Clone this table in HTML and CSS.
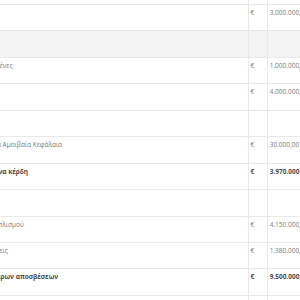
FILE: index.html
```html
<!DOCTYPE html>
<html lang="el">
<head>
<meta charset="utf-8">
<link rel="stylesheet" href="styles.css">
</head>
<body>
<div class="sheet">
  <div class="row partial"><div class="label"></div><div class="cur"></div><div class="amt"></div></div>
  <div class="row"><div class="label"></div><div class="cur">€</div><div class="amt">3.000.000,00</div></div>
  <div class="row shaded"><div class="label"></div><div class="cur"></div><div class="amt"></div></div>
  <div class="row"><div class="label">Μετοχές μη εισηγμένες</div><div class="cur">€</div><div class="amt">1.000.000,00</div></div>
  <div class="row"><div class="label"></div><div class="cur">€</div><div class="amt">4.000.000,00</div></div>
  <div class="row"><div class="label"></div><div class="cur"></div><div class="amt"></div></div>
  <div class="row"><div class="label">Επενδύσεις σε ξένα Αμοιβαία Κεφάλαια</div><div class="cur">€</div><div class="amt">30.000,00</div></div>
  <div class="row total"><div class="label">Πραγματοποιημένα κέρδη</div><div class="cur">€</div><div class="amt">3.970.000,00</div></div>
  <div class="row"><div class="label"></div><div class="cur"></div><div class="amt"></div></div>
  <div class="row"><div class="label">Αρχικό κόστος εξοπλισμού</div><div class="cur">€</div><div class="amt">4.150.000,00</div></div>
  <div class="row"><div class="label">Κτίρια Εγκαταστάσεις</div><div class="cur">€</div><div class="amt">1.380.000,00</div></div>
  <div class="row total"><div class="label">Αξία όλων ελεύθερων αποσβέσεων</div><div class="cur">€</div><div class="amt">9.500.000,00</div></div>
  <div class="row end"><div class="label"></div><div class="cur"></div><div class="amt"></div></div>
</div>
</body>
</html>
```
FILE: styles.css
```css
html, body {
  margin: 0;
  padding: 0;
  overflow: hidden;
  background: #ffffff;
}
body {
  width: 300px;
  height: 300px;
  font-family: "Open Sans", "Liberation Sans", sans-serif;
  font-size: 6.5px;
  color: #7a7a7a;
}
.sheet {
  margin-left: -60px;
  width: 420px;
}
.row {
  display: grid;
  grid-template-columns: 307.6px 19.6px 1fr;
  height: 26.45px;
  box-sizing: border-box;
  border-top: 1px solid #e8e8e8;
}
.row.partial {
  height: 4px;
  border-top: none;
}
.row.shaded {
  background: #f3f3f3;
}
.row.total {
  font-weight: 700;
  color: #4a4a4a;
}
.row.end {
  height: 10px;
}
.row > div {
  padding-top: 3px;
  line-height: 10px;
  white-space: nowrap;
  overflow: hidden;
}
.label {
  padding-left: 2px;
}
.cur {
  border-left: 1px solid #e8e8e8;
  padding-left: 2px;
}
.amt {
  border-left: 1px solid #e8e8e8;
  padding-left: 1.5px;
}
```
